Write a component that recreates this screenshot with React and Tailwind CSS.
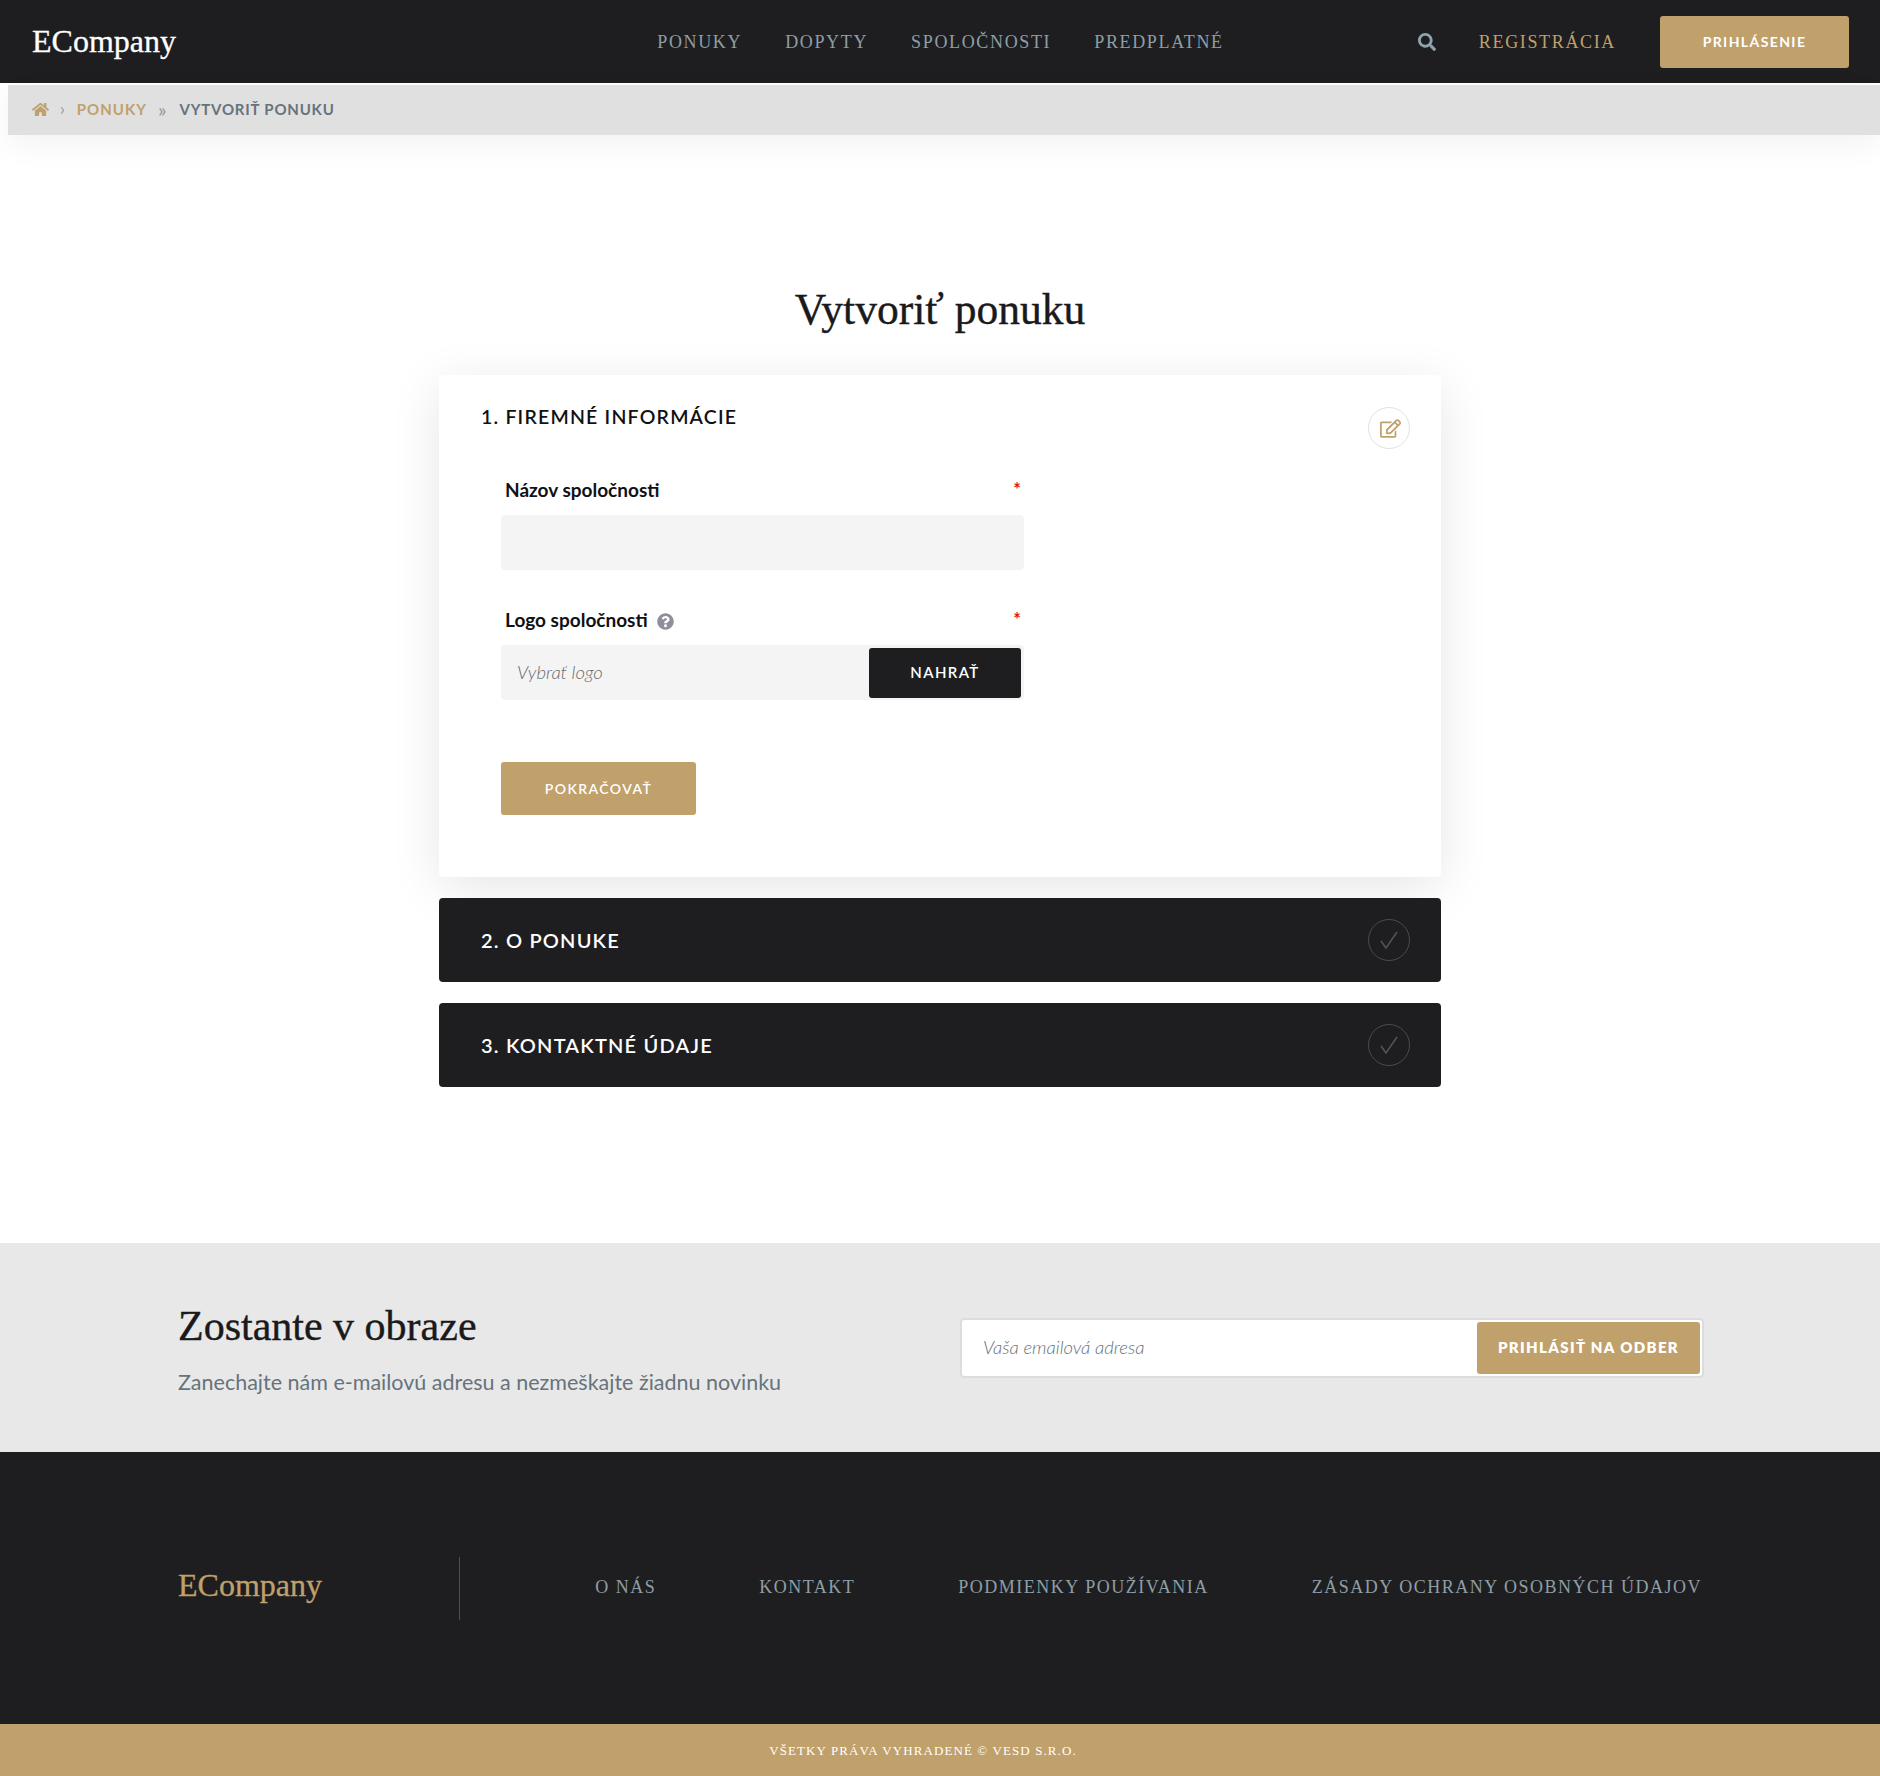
import React from "react";
import { FaHome, FaSearch, FaRegEdit, FaQuestionCircle } from "react-icons/fa";

const SERIF = "font-['Liberation_Serif',serif]";
const SANS = "font-['Lato',sans-serif]";

const Check = () => (
  <span className="flex h-[42px] w-[42px] items-center justify-center rounded-full border border-[#4a4b4e]">
    <svg width="24" height="24" viewBox="0 0 24 24" fill="none" stroke="#55565a" strokeWidth="1.5">
      <path d="M4 13l5 7L20 4" />
    </svg>
  </span>
);

const Accordion = ({ title }) => (
  <div className="flex h-[84px] items-center justify-between rounded-[4px] bg-[#1e1e21] pl-[42px] pr-[31px]">
    <h2 className={`${SANS} text-[20px] font-semibold uppercase tracking-[1.2px] text-white`}>{title}</h2>
    <Check />
  </div>
);

const Label = ({ children, help }) => (
  <div className="flex h-[24px] items-center justify-between pl-[4px] pr-[3px]">
    <span className={`flex items-center pb-[2px] ${SANS} text-[19px] font-bold text-[#111113]`}>
      {children}
      {help && <FaQuestionCircle className="ml-[9px] mt-[2px] text-[#8e8e9c]" size={17} />}
    </span>
    <span className="mb-[4px] text-[18px] font-bold leading-none text-[#e2141c]">*</span>
  </div>
);

export default function App() {
  return (
    <div className={`${SANS} w-[1880px] bg-white`}>
      <header className="grid h-[83px] grid-cols-[1fr_auto_1fr] items-center bg-[#1e1e21] pl-[32px] pr-[31px]">
        <div className={`${SERIF} pb-[2px] text-[32px] text-white [-webkit-text-stroke:0.3px]`}>ECompany</div>
        <nav className={`${SERIF} flex gap-[43px] pt-[2px] text-[18px] uppercase tracking-[1.65px] text-[#8f9ea6]`}>
          <a>Ponuky</a>
          <a>Dopyty</a>
          <a>Spoločnosti</a>
          <a>Predplatné</a>
        </nav>
        <div className="flex items-center justify-end">
          <FaSearch className="text-[#8fa3ad]" size={18} />
          <a className={`${SERIF} ml-[43px] pt-[2px] text-[18px] uppercase tracking-[1.65px] text-[#c0a06b]`}>Registrácia</a>
          <button className="ml-[44px] h-[52px] w-[189px] rounded-[3px] bg-[#c0a06b] text-[14px] font-bold uppercase tracking-[1.4px] text-white">
            Prihlásenie
          </button>
        </div>
      </header>

      <div className="mt-[2px] ml-[8px] flex h-[50px] items-center bg-[#e0e0e0] pb-[2px] pl-[24px] shadow-[0_10px_30px_rgba(0,0,0,0.05)]">
        <FaHome className="text-[#c0a06b]" size={17} />
        <span className="ml-[11px] text-[17px] text-[#93999d]">›</span>
        <a className="ml-[12px] text-[15px] font-bold uppercase tracking-[1px] text-[#c0a06b]">Ponuky</a>
        <span className="ml-[11px] text-[20px] text-[#93999d]">»</span>
        <span className="ml-[13px] text-[15px] font-bold uppercase tracking-[0.8px] text-[#66737b]">Vytvoriť ponuku</span>
      </div>

      <main className="flex h-[1108px] flex-col items-center">
        <h1 className={`${SERIF} mt-[147px] h-[54px] text-[43.5px] leading-[54px] text-[#1a1a1c] [-webkit-text-stroke:0.4px]`}>Vytvoriť ponuku</h1>
        <div className="mt-[39px] flex w-[1002px] flex-col gap-[21px]">
          <section className="h-[502px] rounded-[4px] bg-white shadow-[0_10px_50px_rgba(0,0,0,0.1)]">
            <div className="flex items-start justify-between pl-[42px] pr-[31px] pt-[32px]">
              <h2 className={`${SANS} mt-[1px] text-[19.5px] font-semibold uppercase leading-[18px] tracking-[1.2px] text-[#111113]`}>1. Firemné informácie</h2>
              <span className="flex h-[42px] w-[42px] items-center justify-center rounded-full border border-[#e2e2e2]">
                <FaRegEdit className="ml-[2px] text-[#c0a06b]" size={21} />
              </span>
            </div>
            <div className="ml-[62px] mt-[30px] flex w-[523px] flex-col">
              <Label>Názov spoločnosti</Label>
              <input className="mt-[12px] h-[55px] rounded-[4px] bg-[#f4f4f4] px-[16px] outline-none" />
              <div className="mt-[39px]">
                <Label help>Logo spoločnosti</Label>
              </div>
              <div className="mt-[12px] flex h-[55px] items-center justify-between rounded-[4px] bg-[#f4f4f4] pl-[16px] pr-[3px]">
                <input
                  placeholder="Vybrať logo"
                  className={`${SANS} w-[300px] bg-transparent text-[18.5px] font-light italic text-[#6b6b6b] outline-none placeholder:text-[#6b6b6b]`}
                />
                <button className="h-[50px] w-[152px] rounded-[3px] bg-[#1e1e21] text-[15px] font-semibold uppercase tracking-[1.4px] text-white">
                  Nahrať
                </button>
              </div>
              <button className="mt-[62px] h-[53px] w-[195px] rounded-[3px] bg-[#c0a06b] text-[14px] font-semibold uppercase tracking-[1.4px] text-white">
                Pokračovať
              </button>
            </div>
          </section>
          <Accordion title="2. O ponuke" />
          <Accordion title="3. Kontaktné údaje" />
        </div>
      </main>

      <section className="flex h-[209px] items-center justify-between bg-[#e8e8e8] pl-[178px] pr-[176px]">
        <div className="pt-[1px]">
          <h2 className={`${SERIF} text-[42px] leading-[54px] text-[#1a1a1c] [-webkit-text-stroke:0.4px]`}>Zostante v obraze</h2>
          <p className={`${SANS} mt-[14px] text-[21.5px] leading-[30px] text-[#66737b]`}>
            Zanechajte nám e-mailovú adresu a nezmeškajte žiadnu novinku
          </p>
        </div>
        <div className="flex h-[60px] w-[744px] items-center justify-between rounded-[4px] border-2 border-[#dcdcde] bg-white pl-[21px] pr-[2px]">
          <input
            placeholder="Vaša emailová adresa"
            className={`${SANS} w-[400px] bg-transparent text-[18.5px] font-light italic text-[#66737b] outline-none placeholder:text-[#66737b]`}
          />
          <button className="h-[52px] w-[223px] rounded-[3px] bg-[#c0a06b] text-[15px] font-extrabold uppercase tracking-[1.35px] text-white">
            Prihlásiť na odber
          </button>
        </div>
      </section>

      <footer className="flex h-[272px] items-start justify-between bg-[#1e1e21] px-[178px] pt-[105px]">
        <div className="flex items-center">
          <div className={`${SERIF} w-[281px] pb-[8px] text-[32px] text-[#c0a06b] [-webkit-text-stroke:0.3px]`}>ECompany</div>
          <div className="h-[63px] w-px bg-[#4b5256]" />
        </div>
        <nav className={`${SERIF} flex h-[63px] items-center gap-[103px] pb-[3px] text-[18px] uppercase tracking-[1.5px] text-[#8f9ea6]`}>
          <a>O nás</a>
          <a>Kontakt</a>
          <a>Podmienky používania</a>
          <a>Zásady ochrany osobných údajov</a>
        </nav>
      </footer>

      <div className={`${SERIF} flex h-[52px] items-center justify-center bg-[#c0a06b] pr-[34px] pt-[2px] text-[13px] uppercase tracking-[1.1px] text-white`}>
        Všetky práva vyhradené © VESD s.r.o.
      </div>
    </div>
  );
}
